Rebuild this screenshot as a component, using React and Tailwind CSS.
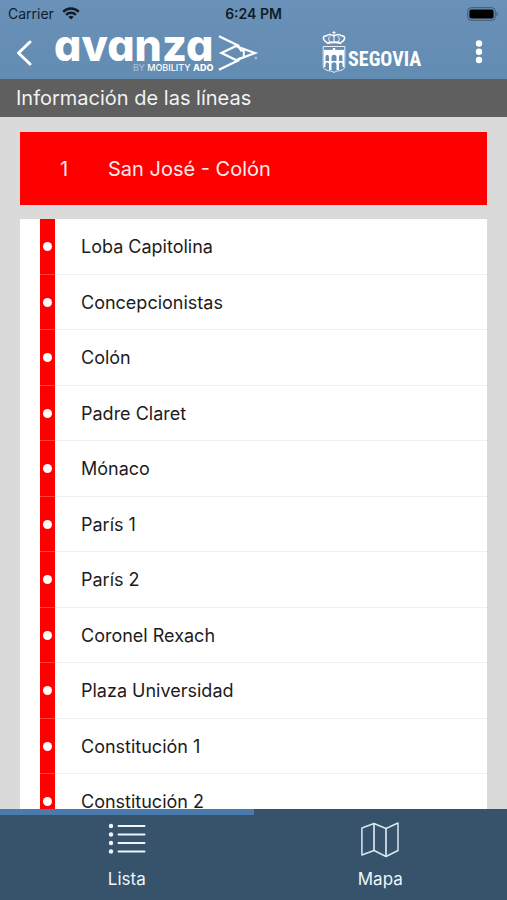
import { useState } from 'react';

const stops = [
  'Loba Capitolina',
  'Concepcionistas',
  'Colón',
  'Padre Claret',
  'Mónaco',
  'París 1',
  'París 2',
  'Coronel Rexach',
  'Plaza Universidad',
  'Constitución 1',
  'Constitución 2',
];

function WifiIcon() {
  return (
    <svg viewBox="0 0 18 13" className="h-[13px] w-[18px]" fill="none" stroke="#111c26" strokeWidth="2.4" aria-hidden="true">
      <path d="M1.2 4.8a11 11 0 0 1 15.6 0" />
      <path d="M4.1 7.8a6.9 6.9 0 0 1 9.8 0" />
      <path d="M9 12.6 6.4 10a3.7 3.7 0 0 1 5.2 0Z" fill="#111c26" stroke="none" />
    </svg>
  );
}

function BatteryIcon() {
  return (
    <svg viewBox="0 0 32 14" className="h-[14px] w-8" aria-hidden="true">
      <rect x="0.7" y="0.7" width="27.6" height="12.6" rx="3.6" fill="none" stroke="#3d5973" />
      <rect x="2.4" y="2.4" width="24.2" height="9.2" rx="2" fill="#000" />
      <path d="M29.6 4.8c1.6.6 1.6 3.8 0 4.4Z" fill="#3d5973" />
    </svg>
  );
}

function StatusBar() {
  return (
    <div className="grid h-[27px] grid-cols-3 items-center px-2 text-[14px] text-[#111c26]">
      <div className="flex items-center gap-2">
        <span>Carrier</span>
        <WifiIcon />
      </div>
      <span className="text-center font-semibold">6:24 PM</span>
      <div className="flex justify-end">
        <BatteryIcon />
      </div>
    </div>
  );
}

function AvanzaLogo() {
  return (
    <div className="flex items-start">
      <div className="flex flex-col items-end">
        <span className="text-[43px] leading-9 font-extrabold [font-feature-settings:'cv11']">avanza</span>
        <span className="text-[9px] leading-[10px] font-medium">
          <span className="font-light opacity-60">BY</span> MOBILITY <b className="font-extrabold">ADO</b>
        </span>
      </div>
      <svg viewBox="0 0 42 38" className="mt-[7px] ml-[5px] h-[38px] w-[42px]" fill="none" stroke="#fff" strokeWidth="2.3" aria-hidden="true">
        <path d="M1 2.2 19.5 11.2 3.5 19l16 7.8L1 35.8" />
        <path d="M19 12.6 37 19l-18 6.8" />
        <path d="M19.5 11 22.5 16M25.8 15v8M22 16.500h4M19.500 27l3-3.500" strokeWidth="1.9" />
        <circle cx="37.8" cy="24" r="0.9" strokeWidth="0.5" />
      </svg>
    </div>
  );
}

function SegoviaLogo() {
  return (
    <div className="flex items-center gap-0.5 pt-1 pl-4">
      <svg viewBox="0 0 24 43" className="h-[43px] w-6" fill="none" stroke="#fff" aria-hidden="true">
        <path d="M12 0v5M10.5 1.5h3" />
        <path d="M5 11.5C0 9 .5 4.5 4.5 4.8 6.5 3 9.5 3.2 12 4.8c2.5-1.6 5.5-1.8 7.5 0 4-.3 4.500 4.200-.5 6.700" strokeWidth="1.5" />
        <path d="M8 11C6 8.5 6.5 6 8.5 5M16 11c2-2.5 1.5-5-.5-6M12 5v6" />
        <path d="M4.8 12.3c4.5-1.3 9.9-1.3 14.4 0" strokeWidth="1.8" />
        <path d="M1.2 15.5h21.6v19.300c0 3-2 4.300-5 4.800-2.500.3-4.800.9-5.800 2-1-1.100-3.300-1.700-5.800-2-3-.5-5-1.800-5-4.800Z" strokeOpacity="0.85" />
        <path d="M2 20h20" strokeWidth="2.2" />
        <path d="M10.8 17h2.400v3h-2.400Z" fill="#fff" stroke="none" />
        <path d="M2 21h20v9h-1.500v-4c0-2.600-3.500-2.600-3.500 0v4h-2.500v-4c0-3-5-3-5 0v4H7v-4c0-2.600-3.500-2.600-3.500 0v4H2Z" fill="#fff" stroke="none" />
        <path d="M2 30h20v6h-1.500v-2.500c0-2.600-3.500-2.600-3.500 0v5.500h-2.500v-5.500c0-3-5-3-5 0V39H7v-5.500c0-2.600-3.500-2.600-3.500 0V36H2Z" fill="#fff" stroke="none" />
      </svg>
      <span className="mt-3 font-['Roboto_Condensed','Roboto',sans-serif] text-[20px] leading-6 font-bold">SEGOVIA</span>
    </div>
  );
}

function ListIcon() {
  return (
    <svg viewBox="0 0 38 32" className="h-8 w-[38px]" stroke="#eef6fb" strokeWidth="2" strokeLinecap="round" aria-hidden="true">
      {[4, 12.5, 21, 29.5].map((y) => (
        <g key={y}>
          <circle cx="3" cy={y} r="2.2" fill="#eef6fb" stroke="none" />
          <path d={`M10.5 ${y}h26`} />
        </g>
      ))}
    </svg>
  );
}

function MapIcon() {
  return (
    <svg viewBox="0 0 38 36" className="h-9 w-[38px]" fill="none" stroke="#dbe6ee" strokeWidth="1.5" strokeLinejoin="round" aria-hidden="true">
      <path d="M.9 6 13 1.5l12 5L37 1v27.500L25 34.500l-12-6L.9 33Z" />
      <path d="M13 1.5v27M25 6.5v28" strokeWidth="1.7" />
    </svg>
  );
}

const tabs = [
  { id: 'lista', label: 'Lista', Icon: ListIcon },
  { id: 'mapa', label: 'Mapa', Icon: MapIcon },
];

export default function App() {
  const [tab, setTab] = useState('lista');

  return (
    <div className="flex h-screen flex-col bg-[#dadada] font-['Inter','Liberation_Sans',sans-serif] text-[#1c1c1c]">
      <header className="bg-linear-to-b from-[#6a91b7] to-[#638cb3]">
        <StatusBar />
        <div className="flex h-[52px] items-start justify-between px-4 text-white">
          <div className="flex items-start gap-5">
            <button type="button" aria-label="Volver" className="pt-3">
              <svg viewBox="0 0 18 28" className="h-7 w-[18px]" fill="none" stroke="#fff" strokeWidth="3" strokeLinecap="round" strokeLinejoin="round" aria-hidden="true">
                <path d="M14 3 2.5 14 14 25" />
              </svg>
            </button>
            <AvanzaLogo />
          </div>
          <SegoviaLogo />
          <button type="button" aria-label="Más opciones" className="pt-3">
            <svg viewBox="0 0 24 26" className="h-[26px] w-6" fill="#fff" aria-hidden="true">
              <circle cx="12" cy="4.5" r="3.2" />
              <circle cx="12" cy="12.8" r="3.2" />
              <circle cx="12" cy="21" r="3.2" />
            </svg>
          </button>
        </div>
      </header>

      <h1 className="bg-[#5f5f5f] px-4 text-[20px] leading-[38px] text-[#f2f2f2]">Información de las líneas</h1>

      <main className="flex min-h-0 flex-1 flex-col gap-[14px] overflow-hidden px-5 pt-[15px]">
        <h2 className="flex h-[73px] shrink-0 items-center bg-[#ff0000] pl-10 text-[20px] text-[#ffe9e9]">
          <span className="w-12">1</span>
          <span>San José - Colón</span>
        </h2>
        <ul className="shrink-0 bg-white">
          {stops.map((stop) => (
            <li key={stop} className="flex h-[55px] items-stretch pl-5 odd:h-14">
              <span className="flex w-[15px] items-center justify-center border-b border-[#ff4040] bg-[#ff0000]">
                <span className="size-[9px] rounded-full bg-white" />
              </span>
              <span className="flex flex-1 items-center border-b border-[#efefef] pl-[26px] text-[18px]">{stop}</span>
            </li>
          ))}
        </ul>
      </main>

      <nav className="grid shrink-0 grid-cols-2 bg-[#36536b] text-[17px] text-[#eef6fb]">
        {tabs.map(({ id, label, Icon }) => (
          <button
            key={id}
            type="button"
            onClick={() => setTab(id)}
            className={`flex flex-col items-center border-t-6 pt-[7px] pb-2 ${tab === id ? 'border-[#4a7bac]' : 'border-transparent'}`}
          >
            <span className="flex h-9 items-start">
              <Icon />
            </span>
            <span className="mt-2 leading-[26px]">{label}</span>
          </button>
        ))}
      </nav>
    </div>
  );
}
